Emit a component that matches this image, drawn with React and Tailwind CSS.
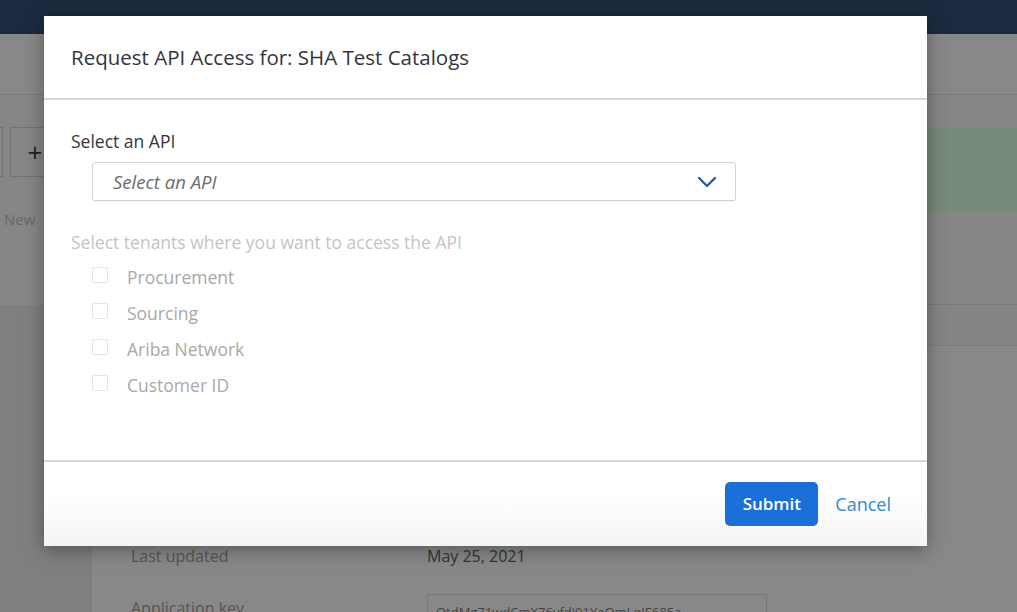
import React from "react";

const tenants = ["Procurement", "Sourcing", "Ariba Network", "Customer ID"];

export default function App() {
    return (
        <div className="relative w-[1017px] h-[612px] overflow-hidden bg-[#858585] font-['Open_Sans','Noto_Sans',sans-serif]">
            {/* page behind the dialog, already dimmed */}
            <div className="h-[34px] bg-[#1b2a3e]" />
            <div className="h-[61px] bg-[#888888] border-b border-[#7b7b7b]" />
            <div className="flex h-[210px] bg-[#868686]">
                <div className="w-[92px] flex flex-col pt-[32px]">
                    <div className="flex gap-[7px]">
                        <div className="w-[3px] h-[50px] border border-l-0 border-[#737373]" />
                        <div className="w-[50px] h-[50px] border border-[#737373] flex items-center justify-center text-[26px] text-[#222] leading-none">+</div>
                    </div>
                    <div className="mt-[31px] pl-[4px] text-[15px] text-[#666]">New</div>
                </div>
                <div className="flex-1 flex flex-col pt-[33px]">
                    <div className="h-[85px] bg-[#778a7b]" />
                    <div className="flex-1 border-b border-[#7a7a7a]" />
                </div>
            </div>
            <div className="flex h-[307px]">
                <div className="w-[92px] bg-[#7f7f7f]" />
                <div className="flex-1 bg-[#888888] border-t border-[#7c7c7c] mt-[40px] pt-[198px] pl-[39px] text-[16px]">
                    <div className="flex">
                        <div className="w-[296px] text-[#555]">Last updated</div>
                        <div className="text-[#333]">May 25, 2021</div>
                    </div>
                    <div className="flex mt-[26px]">
                        <div className="w-[296px] text-[#555] pt-[2px]">Application key</div>
                        <div className="w-[340px] h-[40px] border border-[#777] px-[8px] pt-[8px] text-[13px] text-[#444]">OtdMg71wdCmX76vfdi01YaQmLqJE685a</div>
                    </div>
                </div>
            </div>

            {/* dialog */}
            <div className="absolute left-[44px] top-[16px] w-[883px] h-[530px] bg-white flex flex-col shadow-[0_4px_18px_rgba(0,0,0,0.35)]">
                <div className="h-[84px] flex items-center px-[27px] border-b-2 border-[#d6d6d6] shrink-0">
                    <h2 className="text-[20.5px] text-[#32363a]">Request API Access for: SHA Test Catalogs</h2>
                </div>
                <div className="flex-1 px-[27px] pt-[29px]">
                    <div className="text-[17.5px] text-[#32363a] leading-[24px]">Select an API</div>
                    <div className="ml-[21px] mt-[9px] w-[644px] h-[39px] border border-[#d3d3d3] rounded-[3px] flex items-center justify-between pl-[20px] pr-[18px] shadow-[0_1px_1px_rgba(0,0,0,0.06)]">
                        <span className="italic text-[18.5px] text-[#6a6d70]">Select an API</span>
                        <svg width="20" height="12" viewBox="0 0 20 12" fill="none">
                            <path d="M2 2l8 8 8-8" stroke="#1f5fa6" strokeWidth="2.4" strokeLinecap="round" strokeLinejoin="round" />
                        </svg>
                    </div>
                    <div className="mt-[29px] text-[17.5px] text-[#c4c4c4] leading-[24px]">Select tenants where you want to access the API</div>
                    <div className="mt-[5px] flex flex-col">
                        {tenants.map((t) => (
                            <label key={t} className="flex items-center h-[36px] pl-[21px]">
                                <span className="w-[16px] h-[16px] border border-[#e4e4e4] rounded-[2px] mb-[4px]" />
                                <span className="ml-[19px] text-[17.5px] text-[#a8a8a8]">{t}</span>
                            </label>
                        ))}
                    </div>
                </div>
                <div className="h-[86px] shrink-0 border-t-2 border-[#d6d6d6] bg-gradient-to-b from-white from-40% to-[#f4f4f4] flex items-center justify-end pr-[36px] gap-[17px]">
                    <button className="w-[93px] h-[44px] rounded-[5px] bg-[#1b6fd8] text-white text-[17px] font-semibold">Submit</button>
                    <button className="text-[18px] text-[#2c8ad6]">Cancel</button>
                </div>
            </div>
        </div>
    );
}
